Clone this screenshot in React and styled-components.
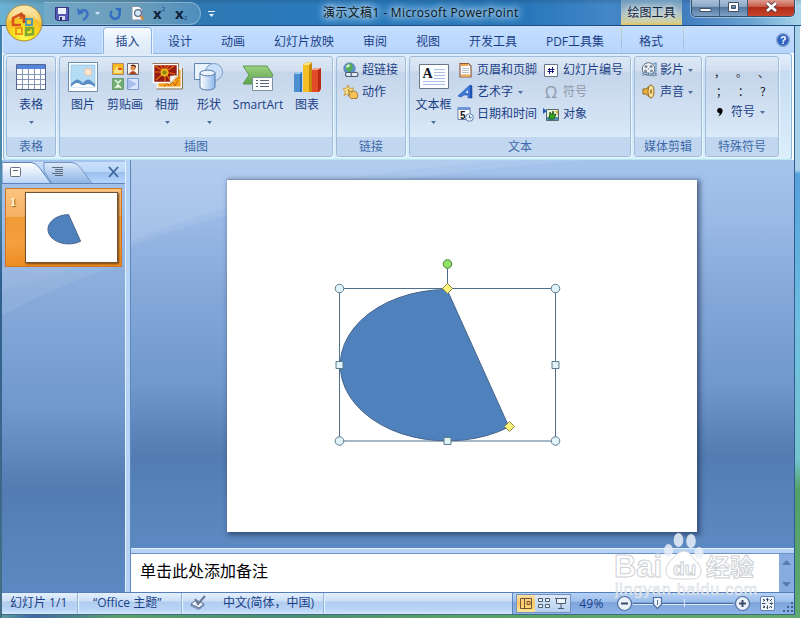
import React from "react";
import styled, { createGlobalStyle } from "styled-components";

const GlobalStyle = createGlobalStyle`
  * {
    box-sizing: border-box;
  }

  body {
    margin: 0;
    overflow: hidden;
    font-family: "Open Sans", "Noto Sans CJK SC", sans-serif;
    font-size: 12px;
    line-height: 16px;
    color: #1b3f86;
  }

  svg {
    display: block;
    flex: none;
  }
`;

/* ---------- icons ---------- */

const Arrow = ({ color = "#4f6f9f" }) => (
  <svg width="5" height="3" viewBox="0 0 5 3">
    <path d="M0 0h5L2.5 3z" fill={color} />
  </svg>
);

const OfficeLogo = () => (
  <svg width="38" height="38" viewBox="0 0 38 38">
    <defs>
      <radialGradient id="orb" cx="50%" cy="90%" r="90%">
        <stop offset="0" stopColor="#fffb52" />
        <stop offset="0.4" stopColor="#fbd91c" />
        <stop offset="0.62" stopColor="#f2bd2a" />
        <stop offset="1" stopColor="#fdeec0" />
      </radialGradient>
    </defs>
    <circle cx="19" cy="19" r="18" fill="url(#orb)" stroke="#a98b3c" />
    <path d="M4 16a15.500 15.500 0 0 1 30 0q-15-5-30 0z" fill="#fff" opacity=".3" />
    <g fill="none" strokeWidth="2.600">
      <path d="M16 21H8v-7l8-4v5" stroke="#d9531e" />
      <path d="M15 10l4 2v7" stroke="#c2471b" />
      <path d="M21 15h6v6h-6z" stroke="#4f9bb4" strokeWidth="2" />
      <path d="M11 24h6v6h-6z" stroke="#f0951c" strokeWidth="2" />
      <path d="M20 24h8v6l-7 1v-5h4" stroke="#7fa82f" />
    </g>
  </svg>
);

const SaveIcon = () => (
  <svg width="14" height="14" viewBox="0 0 14 14">
    <path d="M.5.500h13v13H2l-1.500-1.500z" fill="#5457b4" stroke="#34367f" />
    <path d="M3 1h8v6H3z" fill="#eef2fb" />
    <path d="M4 9h6v4H4z" fill="#d5dbf0" />
    <path d="M5 10h2v3H5z" fill="#2b2d66" />
  </svg>
);

const UndoIcon = () => (
  <svg width="13" height="14" viewBox="0 0 13 14">
    <path d="M3 5q5-4 7 0t-4 8" fill="none" stroke="#3a6fc4" strokeWidth="2.400" />
    <path d="M0 1l1 7 6-2z" fill="#3a6fc4" />
  </svg>
);

const RedoIcon = () => (
  <svg width="13" height="14" viewBox="0 0 13 14">
    <path d="M3 4a4.500 4.500 0 1 0 7 1" fill="none" stroke="#2f6cc2" strokeWidth="2.400" />
    <path d="M6 1h6v6z" fill="#2f6cc2" />
  </svg>
);

const PreviewIcon = () => (
  <svg width="14" height="15" viewBox="0 0 14 15">
    <path d="M1 .5h7l3 3V14H1z" fill="#fff" stroke="#8391a8" />
    <circle cx="7" cy="7" r="3.400" fill="#d5e9f7" stroke="#556883" strokeWidth="1.200" />
    <path d="M9.500 10l3 3.500" stroke="#d18a3a" strokeWidth="2.200" />
  </svg>
);

const TableIcon = () => (
  <svg width="30" height="27" viewBox="0 0 30 27">
    <path d="M.5.500h29v25H.500z" fill="#fff" stroke="#53658f" />
    <path d="M1 1h28v4H1z" fill="#5685da" />
    <path d="M1 10.500h28M1 15.500h28M1 20.500h28M6.500 5v20M12.500 5v20M18.500 5v20M24.500 5v20" stroke="#8795b5" />
  </svg>
);

const PictureIcon = () => (
  <svg width="30" height="30" viewBox="0 0 30 30">
    <path d="M.5.500h29v29H.500z" fill="#fbfdff" stroke="#6d8fae" />
    <path d="M3 3h24v22H3z" fill="#b4dcf5" stroke="#8fbde0" strokeWidth=".6" />
    <circle cx="20" cy="10" r="3.500" fill="#ffe9d0" stroke="#f3bc98" />
    <path d="M3 22q5-6 8-4 2 1 4 3 4-5 7-3l5 4v3H3z" fill="#5a8fc6" />
    <path d="M3 25q5-6 9-3 3 2 5 1 4-3 10 2z" fill="#fff" />
  </svg>
);

const ClipArtIcon = () => (
  <svg width="27" height="27" viewBox="0 0 27 27">
    <path d="M.5.500h11v11H.500z" fill="#f9b61d" stroke="#a98b72" />
    <path d="M2 8l3-5 2 3 3 0v4H2z" fill="#f7e48a" />
    <path d="M6 5h4v2H6z" fill="#e2571d" />
    <path d="M15.500.500h11v11h-11z" fill="#f8f4ee" stroke="#6f6a78" />
    <circle cx="21" cy="5" r="2.500" fill="#d98a4c" />
    <path d="M18 3q3-3 6 0v2l-2-2z" fill="#512512" />
    <path d="M17 11q4-6 8 0z" fill="#b3431f" />
    <path d="M.5 15.500h11v11H.500z" fill="#72ad72" stroke="#6c9a75" />
    <path d="M3 17l3 3 3-3M6 19v6M3 25l3-3 3 3" stroke="#eef8e8" strokeWidth="1.500" fill="none" />
    <path d="M15.500 15.500h11v11h-11z" fill="#dce6fa" stroke="#7d9ccf" />
    <path d="M16 16l9 5-9 5z" fill="#a9c0ee" />
  </svg>
);

const AlbumIcon = () => (
  <svg width="31" height="27" viewBox="0 0 31 27">
    <path d="M5.500 5.500h24v19h-24z" fill="#f4a21b" stroke="#f7efe0" strokeWidth="2" />
    <path d="M4.500 26h26V5" fill="none" stroke="#8a7350" />
    <path d="M12 24l3-4 2 3 4-4 2 4 3-6M23 17l5-3" stroke="#c4660f" fill="none" />
    <path d="M1.500 1.500h24v11l-7 7h-17z" fill="#941c10" stroke="#fff" strokeWidth="1.600" />
    <path d="M.5.500h26v12" fill="none" stroke="#96755c" />
    <path d="M13 9L3 3M13 9V2M13 9l9-6M13 9H3M13 9L4 17M13 9v9M13 9l5 8M13 9l10 2M13 9L8 2M13 9l4-7" stroke="#f06a14" strokeWidth="1.200" />
    <circle cx="12.500" cy="9.500" r="4" fill="#e0b41c" />
    <circle cx="12.500" cy="9.500" r="2" fill="#8c8417" />
    <path d="M26 12l-8 1v7z" fill="#f8f4ec" stroke="#a79a86" strokeWidth=".6" />
  </svg>
);

const ShapesIcon = () => (
  <svg width="30" height="29" viewBox="0 0 30 29">
    <defs>
      <linearGradient id="can">
        <stop offset="0" stopColor="#fff" />
        <stop offset="1" stopColor="#8db7ea" />
      </linearGradient>
    </defs>
    <path d="M.5 1.500h17v16H.500z" fill="#e8f2fd" stroke="#6286b4" />
    <circle cx="20" cy="10" r="8.500" fill="#c9def7" stroke="#7e9fca" />
    <path d="M6 11v14a7.500 3 0 0 0 15 0V11z" fill="url(#can)" stroke="#5479ad" />
    <ellipse cx="13.500" cy="11" rx="7.500" ry="2.800" fill="#eaf3fd" stroke="#5479ad" />
  </svg>
);

const SmartArtIcon = () => (
  <svg width="32" height="27" viewBox="0 0 32 27">
    <defs>
      <linearGradient id="leaf" x2="0" y2="1">
        <stop offset="0" stopColor="#9ed183" />
        <stop offset="1" stopColor="#5ba24a" />
      </linearGradient>
    </defs>
    <path d="M1 1h24l6 9-6 9H1l6-9z" fill="url(#leaf)" stroke="#5b9a53" />
    <path d="M10.500 12.500h20v13h-20z" fill="#fbfcfe" stroke="#7d90a6" />
    <path d="M14 15.500h2M14 18.500h2M14 21.500h2M18 15.500h9M18 18.500h9M18 21.500h9" stroke="#5c6774" />
  </svg>
);

const ChartIcon = () => (
  <svg width="29" height="31" viewBox="0 0 29 31">
    <path d="M1 12l2-2h6v20H1z" fill="#2d70b7" />
    <path d="M1 12h6v18H1z" fill="#4c90d2" />
    <path d="M1 12l2-2h6l-2 2z" fill="#9ac8ef" />
    <path d="M19 8l3-2h6v21l-2 3h-7z" fill="#b92a13" />
    <path d="M19 8h6v22h-6z" fill="#e24b2a" />
    <path d="M19 8l3-2h6l-3 2z" fill="#f7a48c" />
    <path d="M10 3l3-2.500h6v29.500h-9z" fill="#c58b08" />
    <path d="M10 3h6v27h-6z" fill="#f3bf25" />
    <path d="M10 3l3-2.500h6L16 3z" fill="#fde88a" />
  </svg>
);

const LinkIcon = () => (
  <svg width="16" height="16" viewBox="0 0 16 16">
    <circle cx="6.500" cy="6.500" r="5.800" fill="#5a8fc8" stroke="#5c7ba5" strokeWidth=".6" />
    <path d="M3 3q4-3 6-1l1 4-3 4-4-2z" fill="#57ab53" />
    <path d="M3 4l3-2 1 2-3 2z" fill="#d7f0e2" />
    <g fill="#e9edf2" stroke="#4b5d76" strokeWidth="1.100">
      <rect x="2.500" y="10.500" width="7" height="4" rx="2" />
      <rect x="8" y="10.500" width="7" height="4" rx="2" />
    </g>
  </svg>
);

const ActionIcon = () => (
  <svg width="16" height="16" viewBox="0 0 16 16">
    <path d="M5 1l1.500 3.500L11 4 8 7.500l1 4-4-2-4 2 1.500-4L0 4.500l4-.5z" fill="#fde58c" stroke="#c99022" strokeWidth=".8" />
    <path d="M5 5.500l4 3 1-2 4 2q1.500 3 0 6H8L5 11h2z" fill="#f6c35a" stroke="#9b6a1c" strokeWidth=".8" />
  </svg>
);

const TextBoxIcon = () => (
  <svg width="30" height="25" viewBox="0 0 30 25">
    <path d="M.5.500h29v24H.500z" fill="#fdfeff" stroke="#6b7787" />
    <path d="M15 5.500h11M15 8.500h11M15 11.500h11M15 14.500h11M4 17.500h22M4 20.500h22" stroke="#a9bfe6" />
    <text x="3.500" y="14" fontFamily="Liberation Serif, serif" fontWeight="bold" fontSize="14" fill="#10131c">A</text>
  </svg>
);

const HeaderIcon = () => (
  <svg width="13" height="16" viewBox="0 0 13 16">
    <path d="M1 1.500h8.500L12 4v11H1z" fill="#fff" stroke="#8b5a3c" strokeWidth="1.200" />
    <path d="M2 3h7M2 13.500h9" stroke="#f0a54a" strokeWidth="1.800" />
    <path d="M3 6.500h7M3 8.500h7M3 10.500h7" stroke="#9aa5b5" strokeWidth=".7" />
  </svg>
);

const WordArtIcon = () => (
  <svg width="17" height="16" viewBox="0 0 17 16">
    <path d="M1 12L13 1l2 1v12h-4v-3L7 11l-3 2z" fill="#3c78d8" stroke="#234fa5" strokeWidth=".6" />
    <path d="M8.500 9L11 6v3z" fill="#e5effb" />
    <path d="M13 1l2 1v12h-2z" fill="#1d4fae" />
  </svg>
);

const DateIcon = () => (
  <svg width="17" height="16" viewBox="0 0 17 16">
    <path d="M1 1.500h12v12H1z" fill="#fff" stroke="#667c9f" />
    <path d="M1 1h12v3H1z" fill="#6f96d8" />
    <text x="3" y="12.500" fontFamily="Liberation Sans, sans-serif" fontWeight="bold" fontSize="10" fill="#111">5</text>
    <circle cx="12.500" cy="11.500" r="3.800" fill="#e3edfa" stroke="#6783b4" />
    <path d="M12.500 9.500v2.300h2" stroke="#3c5a8f" fill="none" />
  </svg>
);

const SlideNumberIcon = () => (
  <svg width="14" height="13" viewBox="0 0 14 13">
    <path d="M.5.500h13v12H.500z" fill="#fff" stroke="#6a7488" />
    <path d="M5.500 4v6M8.500 3v6M4 5.500h6.500M3.500 7.500H10" stroke="#13197b" />
  </svg>
);

const ObjectIcon = () => (
  <svg width="16" height="14" viewBox="0 0 16 14">
    <path d="M3.500 2.500h12v11h-12z" fill="#e8eed3" stroke="#5a6a6a" />
    <path d="M0 1l4 3-4 3z" fill="#1f5ab8" />
    <path d="M4 10h11v3H4z" fill="#4f8fb5" />
    <path d="M6 12l1-7 2 3 1-4 1 4 2-1-2 5z" fill="#35a51d" stroke="#174f12" strokeWidth=".8" />
    <path d="M12 4h3v4z" fill="#d7a935" />
  </svg>
);

const MovieIcon = () => (
  <svg width="17" height="16" viewBox="0 0 17 16">
    <circle cx="7.500" cy="7" r="6.300" fill="#eef2f6" stroke="#5d6d80" />
    <g fill="#7c8a9c">
      <circle cx="5" cy="4.500" r="1.500" />
      <circle cx="10" cy="4.500" r="1.500" />
      <circle cx="4.500" cy="9" r="1.500" />
      <circle cx="10.500" cy="9" r="1.500" />
      <circle cx="7.500" cy="7" r=".8" />
    </g>
    <path d="M1 13q4-3 7-1t8 0" fill="none" stroke="#5d7a99" strokeWidth="2.600" />
    <path d="M1 13q4-3 7-1t8 0" fill="none" stroke="#cfe3f5" strokeWidth="1.200" strokeDasharray="1.500 1" />
    <path d="M12 2l3-1v8l-2 2" fill="none" stroke="#78a4cc" strokeWidth="1.500" />
  </svg>
);

const SoundIcon = () => (
  <svg width="15" height="16" viewBox="0 0 15 16">
    <path d="M1 5h3l5-4v13l-5-4H1z" fill="#eab53c" stroke="#94651a" />
    <ellipse cx="9" cy="7.500" rx="3" ry="6.500" fill="#fbe7a4" stroke="#94651a" />
    <ellipse cx="9" cy="7.500" rx="1.200" ry="2.500" fill="#b6862a" />
  </svg>
);

const HelpIcon = () => (
  <svg width="14" height="14" viewBox="0 0 14 14">
    <circle cx="7" cy="7" r="6.400" fill="#2e63bf" stroke="#dbe7f6" />
    <circle cx="7" cy="7" r="6.700" fill="none" stroke="#5d7fb6" strokeWidth=".6" />
    <text x="4" y="11" fontFamily="Liberation Sans, sans-serif" fontWeight="bold" fontSize="10.500" fill="#fff">?</text>
  </svg>
);

const SpellIcon = () => (
  <svg width="17" height="15" viewBox="0 0 17 15">
    <path d="M1 9l5-4 8 4-5 4z" fill="#f2f6fb" stroke="#5c7193" />
    <path d="M1 9v2l8 3.500 5-4V9l-5 4z" fill="#8fa6c8" stroke="#5c7193" strokeWidth=".6" />
    <path d="M5 4l3 5 7-8" fill="none" stroke="#6a7890" strokeWidth="2" />
  </svg>
);

const CommaIcon = () => (
  <svg width="6" height="9" viewBox="0 0 6 9">
    <path d="M3 0a2.600 2.600 0 0 1 2.600 3Q5 7 1 8.500 3 6 2.500 5.300A2.600 2.600 0 0 1 3 0z" fill="#000" />
  </svg>
);

/* ---------- window frame ---------- */

const Desktop = styled.div`
  width: 801px;
  height: 618px;
  display: flex;
  padding: 0 6px 3px 2px;
  background:
    linear-gradient(#fff, #fff) right / 1px 100% no-repeat,
    linear-gradient(#a9d2ea 0 170px, #57a0dc 174px, #6fc0e0 330px, #72c3cd 460px, #52a065 490px, #5fa873) right / 6px 100% no-repeat,
    linear-gradient(#3c7fae, #4d8cab 30%, #2f5f8e 45%, #456f83) left / 2px 100% no-repeat,
    linear-gradient(90deg, #5d9e9d, #3f68a4 4%, #5ca069 15%, #4a8b73 35%, #58a166 55%, #62aa6c) bottom / 100% 4px no-repeat;
`;

const Window = styled.div`
  flex: 1;
  min-width: 0;
  display: flex;
  flex-direction: column;
  border-right: 1px solid #315c8d;
  border-bottom: 1px solid #426b85;
`;

const TitleBar = styled.header`
  height: 26px;
  flex: none;
  display: flex;
  margin: 0 -7px 0 -2px;
  background:
    linear-gradient(rgba(0, 0, 0, 0.12), rgba(255, 255, 255, 0) 5px),
    linear-gradient(90deg, #6ab2d4, #629bb9 8%, #5a8fac 17%, #2f79b3 25%, #2a7abd 40%, #2977ba 66%, #4387c7 76%, #3a77bc 84%, #6ba4d2 94%, #a9d6ec);
  border-bottom: 1px solid #1f4c86;
`;

const OfficeButton = styled.button`
  position: absolute;
  left: 5px;
  top: 4px;
  padding: 0;
  border: 0;
  border-radius: 50%;
  background: none;
`;

const QuickAccess = styled.div`
  width: 157px;
  height: 23px;
  margin: 2px 0 0 44px;
  padding: 0 10px 0 11px;
  display: flex;
  align-items: center;
  border: 1px solid rgba(173, 207, 226, 0.5);
  border-left: 0;
  border-radius: 0 12px 12px 0;
  background: rgba(137, 183, 211, 0.35);
`;

const QuickItem = styled.div`
  width: ${(p) => p.$w}px;
  display: flex;
  font: bold 15px/15px "Open Sans", sans-serif;
  color: #10233c;

  sup,
  sub {
    font-size: 6px;
    line-height: 6px;
    color: #2c5c94;
  }
  sub {
    align-self: flex-end;
  }
`;

const QuickMore = styled.div`
  width: 7px;
  margin: 11px 0 0 7px;
  padding-top: 2px;
  height: 6px;
  display: flex;
  justify-content: center;
  border-top: 1px solid #e6f2fb;
`;

const Title = styled.h1`
  flex: 1;
  margin: 5px 0 0 108px;
  font-size: 12px;
  font-weight: 400;
  line-height: 16px;
  letter-spacing: 0.36px;
  color: #0b1620;
  white-space: nowrap;
  text-shadow: 0 0 6px #cfe6f4, 0 0 8px #cfe6f4, 0 0 10px #b5d7ec;
`;

const ContextTitle = styled.div`
  width: 61px;
  padding-top: 5px;
  text-align: center;
  color: #14233a;
  background: linear-gradient(#6d9bc0, #a9bfc5 50%, #d2cf9b 88%, #e4c45c);
  text-shadow: 0 0 5px #dce8ee, 0 0 7px #dce8ee;
`;

const WindowButtons = styled.div`
  width: 104px;
  height: 17px;
  margin: 0 6px 0 9px;
  display: flex;
  border: 1px solid #33506f;
  border-top: 0;
  border-radius: 0 0 5px 5px;
  box-shadow: 0 0 0 1px rgba(220, 238, 250, 0.5);
  overflow: hidden;
`;

const WindowButton = styled.button`
  flex: ${(p) => (p.$close ? 47 : 28)};
  display: flex;
  justify-content: center;
  padding: 0;
  border: 0;
  border-right: ${(p) => (p.$close ? 0 : "1px solid #405f80")};
  background: ${(p) =>
    p.$close
      ? "linear-gradient(#dd9c8f, #c9604d 40%, #b02c17 45%, #c8442b)"
      : "linear-gradient(#a9c0d8, #8da9c6 40%, #54779f 45%, #7fa1c4)"};
`;

/* ---------- tabs ---------- */

const TabBar = styled.nav`
  height: 27px;
  flex: none;
  display: flex;
  padding: 1px 4px 0 46px;
  background: linear-gradient(#c6dffb, #bfdbff 30%, #b9d5fb);
  border-left: 1px solid #d9ebff;
`;

const Tab = styled.div`
  width: ${(p) => p.$w}px;
  height: 27px;
  margin-left: ${(p) => p.$gap || 0}px;
  padding-top: 6px;
  text-align: center;
  white-space: nowrap;
  border: 1px solid transparent;
  border-bottom: 0;

  ${(p) =>
    p.$active &&
    `
    border-color: #8db2e3;
    border-radius: 4px 4px 0 0;
    background: linear-gradient(#f6fbff, #e3eefb 60%, #dde9f7);
    z-index: 1;
    box-shadow: 1px 0 0 #e9f4ff, -1px 0 0 #d5e7fb;
  `}
  ${(p) =>
    p.$context &&
    `
    border-image: linear-gradient(#c9d7ba, #a5bcdc 60%, transparent) 1;
    border-top: 0;
    padding: 7px 3px 0 0;
  `}
`;

const HelpSlot = styled.div`
  margin: 6px 0 0 auto;
`;

/* ---------- ribbon ---------- */

const Ribbon = styled.section`
  height: 107px;
  flex: none;
  display: flex;
  gap: 3px;
  margin: 0 2px 0 1px;
  padding: 2px;
  border: 1px solid #92b4dd;
  border-bottom-color: #b9e4f4;
  border-radius: 4px;
  background: linear-gradient(#e3eefa, #d3e2f4 16px, #c6dcf2 17px, #dbeffb);
  box-shadow: 0 1px 0 #8fb1dc, inset 0 0 0 1px #d8f0fc;
`;

const Group = styled.div`
  width: ${(p) => p.$w}px;
  height: 101px;
  display: flex;
  flex-direction: column;
  border: 1px solid #9fbddb;
  border-radius: 3px;
  overflow: hidden;
  background: linear-gradient(#dde8f4, #d2dfef 14px, #c5d5ea 15px, #d3e2f3 60px, #dcebf8 82px);
  box-shadow: 1px 1px 0 #eaf6fd;
`;

const GroupBody = styled.div`
  flex: 1;
  display: flex;
  padding: ${(p) => p.$pad || "0 1px"};
`;

const GroupLabel = styled.div`
  height: 19px;
  padding-top: 2px;
  text-align: center;
  color: #3e6aaa;
  background: #c1d6ef;
  white-space: nowrap;
`;

const BigButton = styled.div`
  width: ${(p) => p.$w}px;
  display: flex;
  flex-direction: column;
  align-items: center;
  white-space: nowrap;
`;

const BigIcon = styled.div`
  height: 40px;
  padding-top: ${(p) => p.$top}px;
`;

const BigArrow = styled.div`
  margin-top: 8px;
`;

const SmallColumn = styled.div`
  width: ${(p) => p.$w}px;
  padding-top: 2px;
`;

const SmallButton = styled.div`
  height: 22px;
  display: flex;
  align-items: center;
  gap: ${(p) => p.$gap ?? 5}px;
  white-space: nowrap;
  color: ${(p) => (p.$disabled ? "#8d98a8" : "inherit")};
`;

const SmallIcon = styled.div`
  width: ${(p) => p.$w || 16}px;
  display: flex;
  justify-content: center;
  font-size: 16px;
`;

const SmallArrow = styled.div`
  padding-left: ${(p) => p.$space || 0}px;
`;

const SymbolRow = styled.div`
  height: 19px;
  display: grid;
  grid-template-columns: repeat(3, 22px);
  margin-top: ${(p) => p.$top || 0}px;
  padding-left: ${(p) => p.$shift || 0}px;
  font: 11px/18px "Noto Sans CJK SC", sans-serif;
  color: #111;
`;

/* ---------- work area ---------- */

const WorkArea = styled.main`
  flex: 1;
  min-height: 0;
  display: flex;
  background: #b6d3f6;
`;

const paneFill = `linear-gradient(#a5c4ec, #9bbbe7 14%, #86a9d9 33%, #7098cd 58%, #527cb2 76%, #5580b8 84%, #5d89c2)`;

const SlidePane = styled.aside`
  width: 124px;
  display: flex;
  flex-direction: column;
  border-right: 1px solid #e3f1ff;
  background: ${paneFill};
`;

const PaneTabs = styled.div`
  height: 22px;
  margin-top: 2px;
  background: linear-gradient(#c9dffa, #bcd7f8 45%, #9dc0ee 50%, #b4d4fb);
  border-bottom: 1px solid #5d87bc;
`;

const Thumb = styled.div`
  width: 117px;
  height: 79px;
  margin: 4px 0 0 3px;
  padding: 3px;
  display: flex;
  border: 1px solid #cf7626;
  background: linear-gradient(#fbc480, #f6b163 36%, #f09a37 37%, #f4a040 70%, #ee8c20);
`;

const ThumbNumber = styled.div`
  width: 16px;
  padding: 2px 0 0 1px;
  font: bold 12px/16px "Liberation Serif", serif;
  color: #fff9dc;
  text-shadow: 1px 1px 1px #8f5a1c;
`;

const ThumbSlide = styled.div`
  width: 93px;
  height: 71px;
  border: 1px solid #715431;
  background: #fff;
  box-shadow: 1px 1px 2px #6d4310;
`;

const Editor = styled.div`
  flex: 1;
  min-width: 0;
  margin-left: 4px;
  display: flex;
  flex-direction: column;
  border-left: 1px solid #5c88be;
`;

const Stage = styled.div`
  height: 389px;
  flex: none;
  position: relative;
  padding: 19px 0 0 96px;
  background: ${paneFill};
  border-bottom: 1px solid #e0f0ff;
`;

const Swoosh = styled.div`
  position: absolute;
  left: 0;
  top: 0;
  opacity: 0.5;
`;

const Slide = styled.div`
  position: relative;
  width: 470px;
  height: 353px;
  background: #fff;
  border-top: 1px solid #8295b3;
  box-shadow: 2px 2px 5px 1px rgba(32, 49, 84, 0.65);
`;

const Notes = styled.div`
  flex: 1;
  margin-top: 4px;
  display: flex;
  border-top: 1px solid #6a92c6;
  background: #fff;
  font: 16px/20px "Noto Sans CJK SC", sans-serif;
  color: #000;
`;

const NotesText = styled.div`
  flex: 1;
  padding: 6px 0 0 9px;
`;

const NotesScroll = styled.div`
  width: 15px;
  display: flex;
  flex-direction: column;
  align-items: center;
  justify-content: space-between;
  padding: 6px 0 5px;
  background: #88ace0;
`;

/* ---------- status bar ---------- */

const StatusBar = styled.footer`
  height: 22px;
  flex: none;
  display: flex;
  border-top: 1px solid #567fb8;
  background: linear-gradient(#e2effe, #cfe1f8 35%, #b1cdf0 45%, #bad5f6 80%, #d5e8fd);
`;

const StatusCell = styled.div`
  width: ${(p) => p.$w}px;
  padding: 2px 0 0 ${(p) => p.$pad}px;
  display: flex;
  gap: 16px;
  white-space: nowrap;
  border-right: 1px solid #98b6dc;
  box-shadow: 1px 0 0 #e4f1ff;
`;

const ViewTools = styled.div`
  width: 282px;
  margin-left: auto;
  display: flex;
  align-items: center;
  border-left: 1px solid #5d83b9;
  background: linear-gradient(#b5d1f6, #9dbfec 40%, #7fa6dc 45%, #8db4e8);
`;

const ViewButtons = styled.div`
  width: 57px;
  height: 19px;
  margin-left: 3px;
  display: flex;
  border: 1px solid #7494bf;
  background: linear-gradient(#dbe9f9, #b6cfee);
`;

const ViewButton = styled.div`
  flex: 1;
  display: flex;
  align-items: center;
  justify-content: center;
  background: ${(p) => (p.$active ? "linear-gradient(#fcdfa5, #fdc968 50%, #ffe598)" : "none")};
`;

const Percent = styled.div`
  width: 44px;
  padding-left: 8px;
  letter-spacing: 0.3px;
`;

const Watermark = styled.div`
  position: absolute;
  left: 610px;
  top: 530px;
`;

const symbolRows = [
  ["，", "。", "、"],
  ["；", "：", "？"],
];

const tabs = [
  { name: "开始", w: 50 },
  { name: "插入", w: 49, gap: 4, active: true },
  { name: "设计", w: 50, gap: 3 },
  { name: "动画", w: 50, gap: 3 },
  { name: "幻灯片放映", w: 80, gap: 6 },
  { name: "审阅", w: 50, gap: 6 },
  { name: "视图", w: 50, gap: 3 },
  { name: "开发工具", w: 70, gap: 5 },
  { name: "PDF工具集", w: 80, gap: 7 },
  { name: "格式", w: 63, gap: 6, context: true },
];

const illustrations = [
  { name: "图片", w: 42, icon: <PictureIcon />, top: 5 },
  { name: "剪贴画", w: 42, icon: <ClipArtIcon />, top: 6 },
  { name: "相册", w: 42, icon: <AlbumIcon />, top: 6, menu: true },
  { name: "形状", w: 42, icon: <ShapesIcon />, top: 5, menu: true },
  { name: "SmartArt", w: 56, icon: <SmartArtIcon />, top: 8 },
  { name: "图表", w: 42, icon: <ChartIcon />, top: 5 },
];

function Big({ w, icon, name, top, menu }) {
  return (
    <BigButton $w={w}>
      <BigIcon $top={top}>{icon}</BigIcon>
      {name}
      {menu && (
        <BigArrow>
          <Arrow />
        </BigArrow>
      )}
    </BigButton>
  );
}

function Small({ icon, name, menu, disabled, gap, iconWidth, arrowSpace }) {
  return (
    <SmallButton $disabled={disabled} $gap={gap}>
      <SmallIcon $w={iconWidth}>{icon}</SmallIcon>
      {name}
      {menu && (
        <SmallArrow $space={arrowSpace}>
          <Arrow />
        </SmallArrow>
      )}
    </SmallButton>
  );
}

function RibbonGroups() {
  return (
    <Ribbon>
      <Group $w={50}>
        <GroupBody>
          <Big w={46} icon={<TableIcon />} name="表格" top={7} menu />
        </GroupBody>
        <GroupLabel>表格</GroupLabel>
      </Group>
      <Group $w={274}>
        <GroupBody $pad="0 0 0 2px">
          {illustrations.map((p) => (
            <Big key={p.name} {...p} />
          ))}
        </GroupBody>
        <GroupLabel>插图</GroupLabel>
      </Group>
      <Group $w={70}>
        <GroupBody $pad="0 0 0 6px">
          <SmallColumn $w={60}>
            <Small icon={<LinkIcon />} name="超链接" gap={3} />
            <Small icon={<ActionIcon />} name="动作" gap={3} />
          </SmallColumn>
        </GroupBody>
        <GroupLabel>链接</GroupLabel>
      </Group>
      <Group $w={222}>
        <GroupBody $pad="0 0 0 1px">
          <Big w={45} icon={<TextBoxIcon />} name="文本框" top={7} menu />
          <SmallColumn $w={87}>
            <Small icon={<HeaderIcon />} name="页眉和页脚" gap={2} iconWidth={19} />
            <Small icon={<WordArtIcon />} name="艺术字" gap={2} iconWidth={19} menu arrowSpace={3} />
            <Small icon={<DateIcon />} name="日期和时间" gap={2} iconWidth={19} />
          </SmallColumn>
          <SmallColumn $w={84}>
            <Small icon={<SlideNumberIcon />} name="幻灯片编号" gap={4} />
            <Small icon="Ω" name="符号" gap={4} disabled />
            <Small icon={<ObjectIcon />} name="对象" gap={4} />
          </SmallColumn>
        </GroupBody>
        <GroupLabel>文本</GroupLabel>
      </Group>
      <Group $w={68}>
        <GroupBody $pad="0 0 0 6px">
          <SmallColumn $w={60}>
            <Small icon={<MovieIcon />} name="影片" gap={3} menu arrowSpace={1} />
            <Small icon={<SoundIcon />} name="声音" gap={3} menu arrowSpace={1} />
          </SmallColumn>
        </GroupBody>
        <GroupLabel>媒体剪辑</GroupLabel>
      </Group>
      <Group $w={74}>
        <GroupBody $pad="0 0 0 8px">
          <SmallColumn $w={66}>
            {symbolRows.map((row, i) => (
              <SymbolRow key={i} $top={i === 0 ? 4 : 0} $shift={i * 2}>
                {row.map((s) => (
                  <span key={s}>{s}</span>
                ))}
              </SymbolRow>
            ))}
            <SmallArrow />
            <Small icon={<CommaIcon />} name="符号" gap={5} iconWidth={12} menu />
          </SmallColumn>
        </GroupBody>
        <GroupLabel>特殊符号</GroupLabel>
      </Group>
    </Ribbon>
  );
}

function PaneTabStrip() {
  return (
    <PaneTabs>
      <svg width="123" height="21" viewBox="0 0 123 21">
        <defs>
          <linearGradient id="tabOn" x2="0" y2="1">
            <stop offset="0" stopColor="#fff" />
            <stop offset="0.500" stopColor="#dfebfb" />
            <stop offset="1" stopColor="#b9d4f7" />
          </linearGradient>
          <linearGradient id="tabOff" x2="0" y2="1">
            <stop offset="0" stopColor="#dfebfa" />
            <stop offset="0.500" stopColor="#b3cdf0" />
            <stop offset="1" stopColor="#8fb3e4" />
          </linearGradient>
        </defs>
        <path d="M42 .5h28q5 0 9 6l11 15H50L42 9z" fill="url(#tabOff)" stroke="#7396c4" />
        <path d="M0 .5h29q5 0 9 6l11 15H0z" fill="url(#tabOn)" stroke="#5d83b6" />
        <rect x="8.500" y="5.500" width="10" height="9" rx="1" fill="#fff" stroke="#68707c" />
        <path d="M11 8.500h5" stroke="#5e6d85" />
        <path d="M50 5.500h11M53 7.500h8M53 9.500h8M50 11.500h11M53 13.500h8" stroke="#5d6a7c" />
        <path d="M107 5l9 10M116 5l-9 10" stroke="#3f669b" strokeWidth="1.800" />
      </svg>
    </PaneTabs>
  );
}

function Pie() {
  return (
    <svg width="470" height="352" viewBox="227 180 470 352">
      <path d="M447 289.500A107 75.700 0 1 0 509 427z" fill="#4f81bd" stroke="#47648b" />
      <path d="M339.500 288.500h216v152.500h-216zM447.500 268v20" fill="none" stroke="#4c6f8c" />
      <g fill="#dff3f8" stroke="#5c7c8c">
        {[
          [339.5, 288.5],
          [555.5, 288.5],
          [339.5, 441],
          [555.5, 441],
        ].map(([x, y]) => (
          <circle key={`${x}-${y}`} cx={x} cy={y} r="4.300" />
        ))}
        <path d="M336 361.500h7v7h-7zM552 361.500h7v7h-7zM444 437.500h7v7h-7z" />
      </g>
      <circle cx="447.500" cy="264" r="4.300" fill="#8fe163" stroke="#4d8238" />
      <path d="M447.500 283.500l5 5-5 5-5-5zM509.500 421.500l5 5-5 5-5-5z" fill="#fbf37a" stroke="#928845" />
    </svg>
  );
}

function ZoomSlider() {
  return (
    <svg width="180" height="20" viewBox="0 0 180 20">
      <path d="M19 9.500h100" stroke="#4a6b9d" />
      <path d="M19 10.500h100M70.500 5v8" stroke="#dceafc" />
      <g fill="#e9f2fc" stroke="#516f9c" strokeWidth="1.200">
        <circle cx="10.500" cy="9.500" r="7" />
        <circle cx="128.500" cy="9.500" r="7" />
        <path d="M39.500 3.500h8v7l-4 4-4-4z" />
      </g>
      <path d="M7 9.500h7M125 9.500h7M128.500 6v7" stroke="#3d4d67" strokeWidth="2" />
      <path d="M43.500 6v5" stroke="#587399" />
      <rect x="146.500" y="2.500" width="14" height="14" rx="1.500" fill="#f1f6fc" stroke="#6483b1" />
      <path d="M149.500 5.500h8v8h-8z" fill="none" stroke="#556783" strokeDasharray="1 1.500" />
      <path d="M153.500 4v3.500M153.500 11.500v3.500M148 9.500h3.500M155.500 9.500h3.500M149 5l2 2M158 5l-2 2M149 14l2-2M158 14l-2-2" stroke="#33445f" />
      <path d="M179 8h-2v2h2zM179 12h-2v2h2zM179 16h-2v2h2zM175 12h-2v2h2zM175 16h-2v2h2zM171 16h-2v2h2z" fill="#44628f" />
    </svg>
  );
}

function BrandMark() {
  return (
    <Watermark>
      <svg width="160" height="74" viewBox="610 530 160 74">
        <g fill="#e9f0f7" fillOpacity=".85">
          <ellipse cx="678.500" cy="540" rx="4.800" ry="7" />
          <ellipse cx="691" cy="541" rx="4.800" ry="7" />
          <ellipse cx="668.500" cy="550.500" rx="4.500" ry="6.500" />
          <ellipse cx="699" cy="553" rx="4.500" ry="6" />
        </g>
        <path
          d="M684 551q5 0 9 7 9 8 8 14-1 7-8 7h-18q-8 0-9-7-1-6 7-14 6-7 11-7z"
          fill="#fff"
          stroke="#d0d4d9"
        />
        <g fill="#fff" stroke="#cdd0d5" strokeWidth="1" fontWeight="bold">
          <text x="614" y="577" fontFamily="Liberation Sans, sans-serif" fontSize="31" textLength="48" lengthAdjust="spacingAndGlyphs">Bai</text>
          <text x="673" y="575" fontFamily="Liberation Sans, sans-serif" fontSize="19">du</text>
          <text x="706" y="576" fontFamily="Noto Sans CJK SC, sans-serif" fontSize="24">经验</text>
        </g>
        <text
          x="615"
          y="595"
          fontFamily="Liberation Sans, sans-serif"
          fontSize="16"
          textLength="142"
          fill="#fff"
          fillOpacity=".85"
          stroke="#c9d0d9"
          strokeWidth=".5"
        >
          jingyan.baidu.com
        </text>
      </svg>
    </Watermark>
  );
}

function App() {
  return (
    <>
      <GlobalStyle />
      <Desktop>
        <Window>
          <TitleBar>
            <QuickAccess>
              <QuickItem $w={22}>
                <SaveIcon />
              </QuickItem>
              <QuickItem $w={18}>
                <UndoIcon />
              </QuickItem>
              <QuickItem $w={14}>
                <Arrow color="#cfe4f3" />
              </QuickItem>
              <QuickItem $w={22}>
                <RedoIcon />
              </QuickItem>
              <QuickItem $w={22}>
                <PreviewIcon />
              </QuickItem>
              <QuickItem $w={22}>
                x<sup>2</sup>
              </QuickItem>
              <QuickItem $w={14}>
                x<sub>2</sub>
              </QuickItem>
            </QuickAccess>
            <QuickMore>
              <Arrow color="#e6f2fb" />
            </QuickMore>
            <Title>演示文稿1 - Microsoft PowerPoint</Title>
            <ContextTitle>绘图工具</ContextTitle>
            <WindowButtons>
              <WindowButton>
                <svg width="13" height="16" viewBox="0 0 13 16">
                  <path d="M1 8.500h11v3H1z" fill="#fff" stroke="#40536b" />
                </svg>
              </WindowButton>
              <WindowButton>
                <svg width="13" height="16" viewBox="0 0 13 16">
                  <path fillRule="evenodd" d="M1.500 2.500h10v9h-10zM4.500 5.500v3h4v-3z" fill="#fff" stroke="#40536b" />
                </svg>
              </WindowButton>
              <WindowButton $close>
                <svg width="13" height="16" viewBox="0 0 13 16">
                  <path d="M2 3l9 8M11 3l-9 8" stroke="#5b3a42" strokeWidth="4.500" />
                  <path d="M2 3l9 8M11 3l-9 8" stroke="#fff" strokeWidth="2.800" />
                </svg>
              </WindowButton>
            </WindowButtons>
          </TitleBar>
          <TabBar>
            {tabs.map((t) => (
              <Tab key={t.name} $w={t.w} $gap={t.gap} $active={t.active} $context={t.context}>
                {t.name}
              </Tab>
            ))}
            <HelpSlot>
              <HelpIcon />
            </HelpSlot>
          </TabBar>
          <RibbonGroups />
          <WorkArea>
            <SlidePane>
              <PaneTabStrip />
              <Thumb>
                <ThumbNumber>1</ThumbNumber>
                <ThumbSlide>
                  <svg width="91" height="69" viewBox="227 180 470 352">
                    <path d="M447 289.500A107 75.700 0 1 0 509 427z" fill="#4f81bd" stroke="#47648b" strokeWidth="5" />
                  </svg>
                </ThumbSlide>
              </Thumb>
              <svg width="123" height="50" viewBox="0 0 123 50">
                <path d="M0 23Q40 12 80 0H110Q45 23 0 49z" fill="#fff" opacity=".07" />
                <path d="M0 0h80Q40 12 0 23z" fill="#fff" opacity=".11" />
              </svg>
            </SlidePane>
            <Editor>
              <Stage>
                <Swoosh>
                  <svg width="663" height="90" viewBox="0 0 663 90">
                    <path d="M0 86Q180 18 460 0H0z" fill="#fff" opacity=".16" />
                    <path d="M0 81Q180 8 400 0H0z" fill="#fff" opacity=".16" />
                  </svg>
                </Swoosh>
                <Slide>
                  <Pie />
                </Slide>
              </Stage>
              <Notes>
                <NotesText>单击此处添加备注</NotesText>
                <NotesScroll>
                  <svg width="9" height="5" viewBox="0 0 9 5">
                    <path d="M0 5h9L4.500 0z" fill="#587cb0" />
                  </svg>
                  <svg width="9" height="5" viewBox="0 0 9 5">
                    <path d="M0 0h9L4.500 5z" fill="#587cb0" />
                  </svg>
                </NotesScroll>
              </Notes>
            </Editor>
          </WorkArea>
          <StatusBar>
            <StatusCell $w={76} $pad={8}>
              幻灯片 1/1
            </StatusCell>
            <StatusCell $w={104} $pad={15}>
              “Office 主题”
            </StatusCell>
            <StatusCell $w={142} $pad={8}>
              <SpellIcon />
              中文(简体，中国)
            </StatusCell>
            <ViewTools>
              <ViewButtons>
                <ViewButton $active>
                  <svg width="12" height="11" viewBox="0 0 12 11">
                    <path d="M.5.500h11v10H.500zM4.500 0v11M7 3.500h3v3H7z" fill="none" stroke="#6f542c" />
                  </svg>
                </ViewButton>
                <ViewButton>
                  <svg width="12" height="11" viewBox="0 0 12 11">
                    <path d="M.5.500h4v3h-4zM7.500.500h4v3h-4zM.5 6.500h4v3h-4zM7.500 6.500h4v3h-4z" fill="#eef4fc" stroke="#4c5a70" />
                  </svg>
                </ViewButton>
                <ViewButton>
                  <svg width="12" height="11" viewBox="0 0 12 11">
                    <path d="M0 .5h12M1.500.500v5h9v-5M6 6v4M3 10.500h6" fill="#eef4fc" stroke="#4c5a70" />
                  </svg>
                </ViewButton>
              </ViewButtons>
              <Percent>49%</Percent>
              <ZoomSlider />
            </ViewTools>
          </StatusBar>
        </Window>
      </Desktop>
      <OfficeButton>
        <OfficeLogo />
      </OfficeButton>
      <BrandMark />
    </>
  );
}

export default App;
